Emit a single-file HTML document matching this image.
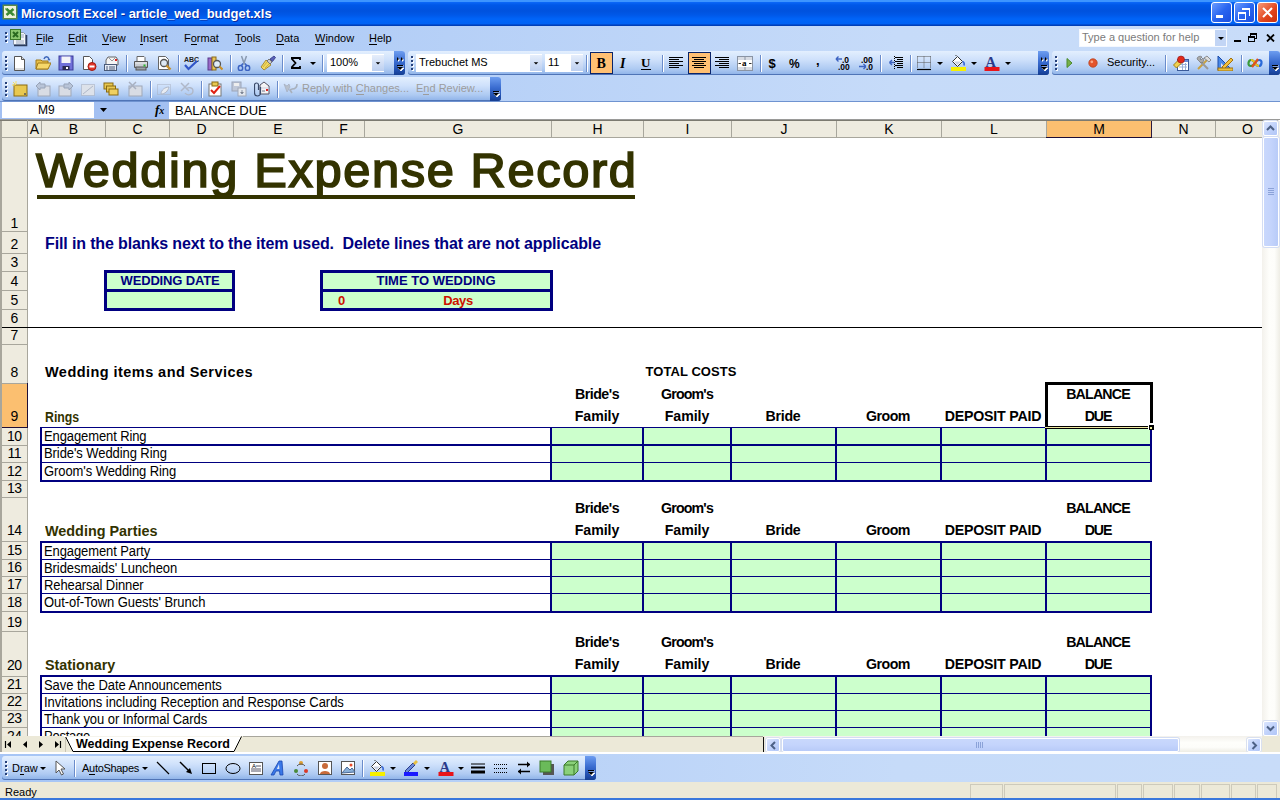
<!DOCTYPE html><html><head><meta charset="utf-8"><style>
*{box-sizing:border-box}
html,body{margin:0;padding:0;width:1280px;height:800px;overflow:hidden;background:#fff;font-family:"Liberation Sans",sans-serif}
.a{position:absolute}
.t{position:absolute;white-space:nowrap;line-height:1}
#title{left:0;top:0;width:1280px;height:26px;background:linear-gradient(#3d95ff 0px,#3d95ff 1.5px,#0a66f6 2.5px,#0058e8 5px,#0052de 11px,#0058e8 15px,#0064f8 19px,#0062f4 23.5px,#0044c4 25px,#003aac 26px)}
.dock{background:linear-gradient(90deg,#a6c5f5,#c6dbf9 70%,#c8dcf9)}
.tb{position:absolute;border-radius:3px 3px 3px 3px;background:linear-gradient(#e3effe 0,#cfe1fb 35%,#aecaf2 75%,#8cb1e8 100%);box-shadow:inset 0 -1px 0 #4f74b6}
.grip{position:absolute;width:3px;height:15px;background:repeating-linear-gradient(#27417a 0 2px,transparent 2px 4px)}
.gd{position:absolute;width:2px;height:2px;background:#27417a;box-shadow:1px 1px 0 #fff}
.sep{position:absolute;width:2px;height:17px;background:linear-gradient(90deg,#6a8ccb 1px,#fff 1px)}
.chev{position:absolute;border-radius:0 3px 3px 0;background:linear-gradient(#6d9df0,#3a6cd0 45%,#1d4aa8 85%,#163e90)}
.hdr{position:absolute;background:#eeebdd;color:#000;font-size:14px;text-align:center}
.mi{position:absolute;top:33px;font-size:12px;color:#000;line-height:1}
.mi u{text-decoration:none;border-bottom:1px solid #000}
</style></head><body>

<div id="title" class="a"></div>
<svg class="a" style="left:2px;top:4px" width="16" height="16"><rect x="0.5" y="0.5" width="15" height="15" fill="#5a8a48"/><rect x="2" y="2" width="12" height="12" fill="#eef3dc"/><path d="M4.5 5L11.5 11M11.5 5L4.5 11" stroke="#3c8a34" stroke-width="2.6"/><path d="M3 5h3M10 11h3" stroke="#3c8a34" stroke-width="1.2"/></svg>
<div class="t" style="left:21px;top:7px;font-size:13px;font-weight:bold;color:#fff;text-shadow:1px 1px 0 #0a2a9a">Microsoft Excel - article_wed_budget.xls</div>
<div class="a" style="left:1211px;top:2px;width:21px;height:21px;border:1px solid #fff;border-radius:3px;background:linear-gradient(135deg,#6b9cff,#2a66f0 50%,#1a4ee0)">
<div class="a" style="left:4px;top:12px;width:7px;height:3px;background:#fff"></div>
</div>
<div class="a" style="left:1234px;top:2px;width:21px;height:21px;border:1px solid #fff;border-radius:3px;background:linear-gradient(135deg,#6b9cff,#2a66f0 50%,#1a4ee0)">
<div class="a" style="left:7px;top:5px;width:8px;height:8px;border:1px solid #fff;border-top-width:2px;border-left:none;border-bottom:none"></div><div class="a" style="left:3px;top:9px;width:8px;height:8px;border:1px solid #fff;border-top-width:2px"></div>
</div>
<div class="a" style="left:1257px;top:2px;width:21px;height:21px;border:1px solid #fff;border-radius:3px;background:linear-gradient(135deg,#fa9a78,#e0441c 60%,#c8300e)">
<svg class="a" style="left:3px;top:3px" width="13" height="13"><path d="M2 2L11 11M11 2L2 11" stroke="#fff" stroke-width="2"/></svg>
</div>
<div class="a dock" style="left:0;top:26px;width:1280px;height:76px"></div>
<div class="gd" style="left:5px;top:32px"></div>
<div class="gd" style="left:5px;top:36px"></div>
<div class="gd" style="left:5px;top:40px"></div>
<svg class="a" style="left:10px;top:29px" width="18" height="18"><path d="M3.5 3.5h10l2 2v10h-12z" fill="#f4f6fa" stroke="#8a98b0"/><path d="M4 16.5h12.5V6" stroke="#2a3a5a" stroke-width="1.6" fill="none"/><path d="M11 6h3M11 8h3M6 12h8M6 14h8" stroke="#9aa8c0"/><rect x="0.5" y="0.5" width="10" height="10" fill="#8cc870" stroke="#3c7a2a"/><path d="M3 3l5 5M8 3L3 8" stroke="#2a6a20" stroke-width="2"/></svg>
<div class="mi" style="left:36px;font-size:11px"><u>F</u>ile</div>
<div class="mi" style="left:68px;font-size:11px"><u>E</u>dit</div>
<div class="mi" style="left:102px;font-size:11px"><u>V</u>iew</div>
<div class="mi" style="left:140px;font-size:11px"><u>I</u>nsert</div>
<div class="mi" style="left:184px;font-size:11px">F<u>o</u>rmat</div>
<div class="mi" style="left:235px;font-size:11px"><u>T</u>ools</div>
<div class="mi" style="left:276px;font-size:11px"><u>D</u>ata</div>
<div class="mi" style="left:315px;font-size:11px"><u>W</u>indow</div>
<div class="mi" style="left:369px;font-size:11px"><u>H</u>elp</div>
<div class="a" style="left:1079px;top:29px;width:148px;height:18px;background:#fff;border:1px solid #f4f8ff"></div>
<div class="t" style="left:1082px;top:32px;font-size:11px;color:#7b7b7b">Type a question for help</div>
<div class="a" style="left:1215px;top:30px;width:11px;height:16px;background:#c2d5f5"></div>
<svg class="a" style="left:1218px;top:37px" width="6" height="3"><path d="M0 0h6L3 3z" fill="#000"/></svg>
<div class="a" style="left:1234px;top:40px;width:7px;height:2px;background:#000"></div>
<div class="a" style="left:1250px;top:33px;width:7px;height:6px;border:1px solid #000;border-top-width:2px"></div><div class="a" style="left:1248px;top:36px;width:7px;height:6px;border:1px solid #000;border-top-width:2px;background:#c6dbf9"></div>
<svg class="a" style="left:1266px;top:34px" width="9" height="8"><path d="M1 0.5L8 7.5M8 0.5L1 7.5" stroke="#000" stroke-width="1.8"/></svg>
<div class="tb" style="left:2px;top:51px;width:403px;height:24px"></div>
<div class="gd" style="left:5px;top:56px"></div>
<div class="gd" style="left:5px;top:60px"></div>
<div class="gd" style="left:5px;top:64px"></div>
<div class="gd" style="left:5px;top:68px"></div>
<div class="chev" style="left:394px;top:51px;width:11px;height:24px"></div>
<svg class="a" style="left:396px;top:57px" width="9" height="6"><path d="M2 1l2 2-2 2zM6 1l2 2-2 2z" fill="#fff"/><path d="M1 0l2 2-2 2zM5 0l2 2-2 2z" fill="#000"/></svg>
<svg class="a" style="left:396px;top:64px" width="9" height="8"><path d="M2 2h6M2 4h6l-3 3z" stroke="#fff" fill="#fff" stroke-width="0.8"/><path d="M1 1.5h6" stroke="#000"/><path d="M1 3h6l-3 3z" fill="#000"/></svg>
<svg class="a" style="left:11px;top:55px" width="16" height="16" viewBox="0 0 16 16"><path d="M3.5 1.5h7l3 3v11h-10z" fill="#fff" stroke="#555"/><path d="M10.5 1.5v3h3" fill="#ddd" stroke="#555"/><path d="M4 14h9" stroke="#bbb"/></svg>
<svg class="a" style="left:35px;top:55px" width="16" height="16" viewBox="0 0 16 16"><path d="M1 5h5l1 1h6v8H1z" fill="#e9c14a" stroke="#a07a1a"/><path d="M3 8h13l-3 6H1z" fill="#f6d86a" stroke="#a07a1a"/><path d="M9 4c1-3 4-3 5 0" stroke="#3e66b8" fill="none" stroke-width="1.5"/><path d="M12.5 4h3l-1.5 2z" fill="#3e66b8"/></svg>
<svg class="a" style="left:58px;top:55px" width="16" height="16" viewBox="0 0 16 16"><rect x="1" y="1" width="14" height="14" fill="#7070d8" stroke="#3a3a9a"/><rect x="3.5" y="1.5" width="9" height="6.5" fill="#f4f4f8"/><rect x="4.5" y="11" width="7" height="4" fill="#2a2a50"/><rect x="8" y="12" width="2" height="2" fill="#fff"/></svg>
<svg class="a" style="left:81px;top:55px" width="16" height="16" viewBox="0 0 16 16"><path d="M2.5 1.5h6l3 3v10h-9z" fill="#fff" stroke="#555"/><circle cx="11" cy="11.5" r="4" fill="#e2362a" stroke="#a01a10"/><rect x="8.5" y="10.5" width="5" height="2" fill="#fff"/></svg>
<svg class="a" style="left:104px;top:55px" width="16" height="16" viewBox="0 0 16 16"><path d="M4 2h8l2 3v5H2V5z" fill="#f4f4f4" stroke="#666"/><path d="M4 2l4 4 4-4" stroke="#999" fill="none"/><rect x="11" y="4" width="2" height="2" fill="#d22"/><rect x="0.5" y="9.5" width="12" height="6" fill="#e8ecf4" stroke="#4a5a78"/><path d="M2 12h2M5 12h6M2 14h2M5 14h6" stroke="#4a5a78"/></svg>
<svg class="a" style="left:133px;top:55px" width="16" height="16" viewBox="0 0 16 16"><path d="M4 1.5h7l1 1v4H4z" fill="#fff" stroke="#666"/><path d="M1.5 6.5h13v6h-13z" fill="#c8ccd2" stroke="#555"/><path d="M2 8h12" stroke="#eee"/><rect x="3" y="12" width="10" height="3" fill="#9aa0a8" stroke="#555"/><rect x="10.5" y="9.5" width="2" height="2" fill="#2db52d"/></svg>
<svg class="a" style="left:156px;top:55px" width="16" height="16" viewBox="0 0 16 16"><path d="M2.5 1.5h7l3 3v10h-10z" fill="#fff" stroke="#666"/><circle cx="8" cy="8" r="3.5" fill="#dde8f4" stroke="#555" stroke-width="1.3"/><path d="M10.5 10.5l4 4" stroke="#c8902a" stroke-width="2.4"/></svg>
<svg class="a" style="left:183px;top:55px" width="16" height="16" viewBox="0 0 16 16"><text x="1" y="7" font-family="Liberation Sans" font-weight="bold" font-size="7" fill="#222">ABC</text><path d="M2 10l3.5 4L14 6" stroke="#3156c8" stroke-width="2.2" fill="none"/></svg>
<svg class="a" style="left:207px;top:55px" width="16" height="16" viewBox="0 0 16 16"><rect x="1" y="3" width="4" height="12" fill="#9a6ac8" stroke="#5a3a8a"/><rect x="5" y="2" width="4" height="13" fill="#e8c45a" stroke="#8a6a1a"/><circle cx="10" cy="9" r="3.5" fill="#e0ecf8" stroke="#555" stroke-width="1.3"/><path d="M12.5 11.5l3 3" stroke="#c8902a" stroke-width="2.2"/></svg>
<svg class="a" style="left:236px;top:55px" width="16" height="16" viewBox="0 0 16 16"><path d="M5.5 1l3 8.5M10.5 1l-3 8.5" stroke="#8a9ab0" stroke-width="1.5"/><path d="M7 8.5l-2 2.5M9 8.5l2 2.5" stroke="#3d64c2" stroke-width="1.4"/><ellipse cx="4.5" cy="13" rx="2.2" ry="2.6" fill="none" stroke="#3d64c2" stroke-width="1.5"/><ellipse cx="11.5" cy="13" rx="2.2" ry="2.6" fill="none" stroke="#3d64c2" stroke-width="1.5"/></svg>
<svg class="a" style="left:260px;top:55px" width="16" height="16" viewBox="0 0 16 16"><path d="M1 12l5-7 5 5-7 5z" fill="#f0d860" stroke="#9a7a20" stroke-width="0.8"/><path d="M3 12l4-5M5 13l4-4" stroke="#c8a838" stroke-width="0.8"/><path d="M7 6l2-2 3 3-2 2z" fill="#c8c8d0" stroke="#777"/><path d="M10 4l4-3 1.5 1.5-3 4z" fill="#5a60b8" stroke="#303880" stroke-width="0.8"/></svg>
<svg class="a" style="left:288px;top:55px" width="16" height="16" viewBox="0 0 16 16"><path d="M3 3h9v2M3.5 3.5l4 4.5-4 4.5M3 13h9v-2" stroke="#000" stroke-width="1.8" fill="none"/></svg>
<div class="sep" style="left:126px;top:55px"></div>
<div class="sep" style="left:178px;top:55px"></div>
<div class="sep" style="left:230px;top:55px"></div>
<div class="sep" style="left:282px;top:55px"></div>
<div class="sep" style="left:322px;top:55px"></div>
<svg class="a" style="left:305px;top:55px" width="16" height="16" viewBox="0 0 16 16"><path d="M5 7h6l-3 3z" fill="#000"/></svg>
<div class="a" style="left:327px;top:54px;width:57px;height:18px;background:#fff"></div>
<div class="t" style="left:330px;top:57px;font-size:11px">100%</div>
<div class="a" style="left:372px;top:55px;width:12px;height:16px;background:linear-gradient(#e6eefb,#bccff0)"></div>
<svg class="a" style="left:372px;top:55px" width="12" height="16" viewBox="0 0 16 16"><path d="M5 7h6l-3 3z" fill="#000"/></svg>
<div class="tb" style="left:408px;top:51px;width:641px;height:24px"></div>
<div class="gd" style="left:411px;top:56px"></div>
<div class="gd" style="left:411px;top:60px"></div>
<div class="gd" style="left:411px;top:64px"></div>
<div class="gd" style="left:411px;top:68px"></div>
<div class="chev" style="left:1038px;top:51px;width:11px;height:24px"></div>
<svg class="a" style="left:1040px;top:57px" width="9" height="6"><path d="M2 1l2 2-2 2zM6 1l2 2-2 2z" fill="#fff"/><path d="M1 0l2 2-2 2zM5 0l2 2-2 2z" fill="#000"/></svg>
<svg class="a" style="left:1040px;top:64px" width="9" height="8"><path d="M2 2h6M2 4h6l-3 3z" stroke="#fff" fill="#fff" stroke-width="0.8"/><path d="M1 1.5h6" stroke="#000"/><path d="M1 3h6l-3 3z" fill="#000"/></svg>
<div class="a" style="left:416px;top:54px;width:126px;height:18px;background:#fff"></div>
<div class="t" style="left:419px;top:57px;font-size:11px">Trebuchet MS</div>
<div class="a" style="left:530px;top:55px;width:12px;height:16px;background:linear-gradient(#e6eefb,#bccff0)"></div>
<svg class="a" style="left:530px;top:55px" width="12" height="16" viewBox="0 0 16 16"><path d="M5 7h6l-3 3z" fill="#000"/></svg>
<div class="a" style="left:545px;top:54px;width:38px;height:18px;background:#fff"></div>
<div class="t" style="left:548px;top:57px;font-size:11px">11</div>
<div class="a" style="left:571px;top:55px;width:12px;height:16px;background:linear-gradient(#e6eefb,#bccff0)"></div>
<svg class="a" style="left:571px;top:55px" width="12" height="16" viewBox="0 0 16 16"><path d="M5 7h6l-3 3z" fill="#000"/></svg>
<div class="sep" style="left:586px;top:55px"></div>
<div class="a" style="left:590px;top:52px;width:23px;height:22px;background:#ffc073;border:1px solid #0a246a"></div>
<div class="a" style="left:688px;top:52px;width:23px;height:22px;background:#ffc073;border:1px solid #0a246a"></div>
<svg class="a" style="left:593px;top:55px" width="16" height="16" viewBox="0 0 16 16"><text x="3.5" y="13" font-family="Liberation Serif" font-weight="bold" font-size="14" fill="#000">B</text></svg>
<svg class="a" style="left:616px;top:55px" width="16" height="16" viewBox="0 0 16 16"><text x="4" y="13" font-family="Liberation Serif" font-style="italic" font-weight="bold" font-size="14" fill="#000">I</text></svg>
<svg class="a" style="left:638px;top:55px" width="16" height="16" viewBox="0 0 16 16"><text x="3" y="12" font-family="Liberation Serif" font-weight="bold" font-size="13" fill="#000">U</text><path d="M3 14.5h10" stroke="#000"/></svg>
<svg class="a" style="left:668px;top:55px" width="16" height="16" viewBox="0 0 16 16"><path d="M1 2.5h14M1 4.5h10M1 6.5h14M1 8.5h10M1 10.5h14M1 12.5h10" stroke="#000"/></svg>
<svg class="a" style="left:691px;top:55px" width="16" height="16" viewBox="0 0 16 16"><path d="M1 2.5h14M3 4.5h10M1 6.5h14M3 8.5h10M1 10.5h14M3 12.5h10" stroke="#000"/></svg>
<svg class="a" style="left:714px;top:55px" width="16" height="16" viewBox="0 0 16 16"><path d="M1 2.5h14M5 4.5h10M1 6.5h14M5 8.5h10M1 10.5h14M5 12.5h10" stroke="#000"/></svg>
<svg class="a" style="left:737px;top:55px" width="16" height="16" viewBox="0 0 16 16"><rect x="0.5" y="1.5" width="15" height="14" fill="#d8dce4" stroke="#8a94a4"/><rect x="1" y="5" width="14" height="7" fill="#fff"/><path d="M8 2v3M8 12v3" stroke="#8a94a4"/><text x="5" y="11" font-family="Liberation Serif" font-weight="bold" font-size="9" fill="#000">a</text><path d="M1.5 8.5h2.5M12 8.5h2.5" stroke="#333"/></svg>
<svg class="a" style="left:765px;top:55px" width="16" height="16" viewBox="0 0 16 16"><text x="3.5" y="13" font-family="Liberation Sans" font-weight="bold" font-size="13" fill="#000">$</text></svg>
<svg class="a" style="left:788px;top:55px" width="16" height="16" viewBox="0 0 16 16"><text x="1" y="13" font-family="Liberation Sans" font-weight="bold" font-size="12" fill="#000">%</text></svg>
<svg class="a" style="left:811px;top:55px" width="16" height="16" viewBox="0 0 16 16"><text x="5" y="10" font-family="Liberation Sans" font-weight="bold" font-size="13" fill="#000">,</text></svg>
<svg class="a" style="left:835px;top:55px" width="16" height="16" viewBox="0 0 16 16"><text x="7" y="7.5" font-family="Liberation Sans" font-weight="bold" font-size="8.5" fill="#000">.0</text><text x="3" y="15" font-family="Liberation Sans" font-weight="bold" font-size="8.5" fill="#000">.00</text><path d="M1 4h6M1 4l2.5-2.5M1 4l2.5 2.5" stroke="#3d64c2" stroke-width="1.4"/></svg>
<svg class="a" style="left:858px;top:55px" width="16" height="16" viewBox="0 0 16 16"><text x="3" y="7.5" font-family="Liberation Sans" font-weight="bold" font-size="8.5" fill="#000">.00</text><text x="8" y="15" font-family="Liberation Sans" font-weight="bold" font-size="8.5" fill="#000">.0</text><path d="M1 11.5h7M8 11.5l-2.5-2.5M8 11.5l-2.5 2.5" stroke="#3d64c2" stroke-width="1.4"/></svg>
<svg class="a" style="left:888px;top:55px" width="16" height="16" viewBox="0 0 16 16"><path d="M7 2.5h8M9 4.5h6M7 6.5h8M9 8.5h6M7 10.5h8M9 12.5h6" stroke="#000" stroke-width="1.1"/><path d="M6.5 1v14" stroke="#000" stroke-dasharray="1 1"/><path d="M1.5 7.5h5M1.5 7.5l2.5-2.5M1.5 7.5l2.5 2.5" stroke="#3d64c2" stroke-width="1.4"/></svg>
<svg class="a" style="left:916px;top:55px" width="16" height="16" viewBox="0 0 16 16"><path d="M1.5 1.5h13M1.5 1.5v12M14.5 1.5v12M8 1.5v12M1.5 7.5h13" stroke="#555" stroke-dasharray="1 1" fill="none"/><path d="M1 14.5h14" stroke="#000" stroke-width="1.2"/></svg>
<svg class="a" style="left:950px;top:55px" width="16" height="16" viewBox="0 0 16 16"><path d="M2.5 6.5l5-5 5 5-5 5z" fill="#fff" stroke="#333"/><path d="M4 6.5h7l-3.5 3.5z" fill="#c8d0e0"/><path d="M6 1V-1" stroke="#333"/><path d="M12.5 6.5c1.5 0.5 2 2 1.5 4" stroke="#3a6ad8" stroke-width="1.6" fill="none"/><rect x="1" y="12" width="15" height="4" fill="#f6f000"/></svg>
<svg class="a" style="left:984px;top:55px" width="16" height="16" viewBox="0 0 16 16"><text x="1.5" y="11.5" font-family="Liberation Serif" font-weight="bold" font-size="14.5" fill="#2a3a8a">A</text><rect x="0.5" y="12" width="15" height="4" fill="#e8141a"/></svg>
<div class="sep" style="left:662px;top:55px"></div>
<div class="sep" style="left:760px;top:55px"></div>
<div class="sep" style="left:880px;top:55px"></div>
<div class="sep" style="left:910px;top:55px"></div>
<svg class="a" style="left:932px;top:55px" width="16" height="16" viewBox="0 0 16 16"><path d="M5 7h6l-3 3z" fill="#000"/></svg>
<svg class="a" style="left:966px;top:55px" width="16" height="16" viewBox="0 0 16 16"><path d="M5 7h6l-3 3z" fill="#000"/></svg>
<svg class="a" style="left:1000px;top:55px" width="16" height="16" viewBox="0 0 16 16"><path d="M5 7h6l-3 3z" fill="#000"/></svg>
<div class="tb" style="left:1052px;top:51px;width:228px;height:24px"></div>
<div class="gd" style="left:1055px;top:56px"></div>
<div class="gd" style="left:1055px;top:60px"></div>
<div class="gd" style="left:1055px;top:64px"></div>
<div class="gd" style="left:1055px;top:68px"></div>
<div class="chev" style="left:1269px;top:51px;width:11px;height:24px"></div>
<svg class="a" style="left:1271px;top:64px" width="9" height="8"><path d="M2 2h6M2 4h6l-3 3z" stroke="#fff" fill="#fff" stroke-width="0.8"/><path d="M1 1.5h6" stroke="#000"/><path d="M1 3h6l-3 3z" fill="#000"/></svg>
<svg class="a" style="left:1061px;top:55px" width="16" height="16" viewBox="0 0 16 16"><path d="M6 3.5l5 4.5-5 4.5z" fill="#78b04a" stroke="#4a8a2a"/></svg>
<svg class="a" style="left:1085px;top:55px" width="16" height="16" viewBox="0 0 16 16"><circle cx="8" cy="8" r="4.2" fill="#e4542c" stroke="#b8401c" stroke-width="0.8"/><circle cx="6.8" cy="6.8" r="1.4" fill="#f8a888"/></svg>
<svg class="a" style="left:1173px;top:55px" width="16" height="16" viewBox="0 0 16 16"><rect x="4.5" y="4.5" width="11" height="11" fill="#fff" stroke="#3a5a9a"/><rect x="5" y="5" width="10" height="2" fill="#6a8ad8"/><path d="M6 9.5h8M6 12h8M9.5 8v7M12.5 8v7" stroke="#9ab0d8"/><path d="M0.5 10l5-5 3 3-5 5z" fill="#f0d050" stroke="#a08010"/><circle cx="8" cy="4.5" r="3.5" fill="#e02818" stroke="#901010" stroke-width="0.6"/></svg>
<svg class="a" style="left:1195px;top:55px" width="16" height="16" viewBox="0 0 16 16"><path d="M3 14L12 5" stroke="#c8a040" stroke-width="2"/><path d="M13 14L5 6" stroke="#9a9a9a" stroke-width="2"/><path d="M2 4a3 3 0 0 1 5-2l-2 2 1 1 2-2a3 3 0 0 1-2 5z" fill="#aaa" stroke="#666" stroke-width="0.6"/><path d="M9 3l3-2 4 4-2 2z" fill="#ddd" stroke="#777" stroke-width="0.8"/></svg>
<svg class="a" style="left:1217px;top:55px" width="16" height="16" viewBox="0 0 16 16"><path d="M1 1v14h14z" fill="#4a8ae8" stroke="#1a4aa8"/><path d="M4 8v4h4z" fill="#dde"/><path d="M5 12l9-9 2 2-9 9z" fill="#f0c040" stroke="#a07010"/><rect x="1" y="13" width="15" height="3" fill="#e8c040" stroke="#a07010"/></svg>
<svg class="a" style="left:1247px;top:55px" width="16" height="16" viewBox="0 0 16 16"><path d="M8 8c-2-4-6-4-6.5 0S6 12 8 8" fill="none" stroke="#3a9a3a" stroke-width="2.2"/><path d="M8 8c2 4 6 4 6.5 0S10 4 8 8" fill="none" stroke="#2a6ad8" stroke-width="2.2"/><path d="M4 5c2 0 3 1 4 3M12 11c-2 0-3-1-4-3" stroke="#e8c020" stroke-width="2"/><path d="M5 12l6-8" stroke="#e05020" stroke-width="2.2"/></svg>
<div class="t" style="left:1107px;top:57px;font-size:11px">Security...</div>
<div class="sep" style="left:1165px;top:55px"></div>
<div class="sep" style="left:1241px;top:55px"></div>
<div class="tb" style="left:2px;top:77px;width:499px;height:24px"></div>
<div class="gd" style="left:5px;top:82px"></div>
<div class="gd" style="left:5px;top:86px"></div>
<div class="gd" style="left:5px;top:90px"></div>
<div class="gd" style="left:5px;top:94px"></div>
<div class="chev" style="left:490px;top:77px;width:11px;height:24px"></div>
<svg class="a" style="left:492px;top:90px" width="9" height="8"><path d="M2 2h6M2 4h6l-3 3z" stroke="#fff" fill="#fff" stroke-width="0.8"/><path d="M1 1.5h6" stroke="#000"/><path d="M1 3h6l-3 3z" fill="#000"/></svg>
<svg class="a" style="left:12px;top:81px" width="16" height="16" viewBox="0 0 16 16"><rect x="2" y="4" width="13" height="11" fill="#e8c850" stroke="#8a6a10"/><circle cx="13" cy="13" r="1" fill="#555"/><path d="M1 1l3 3M4 0v3M0 4h3" stroke="#f8e060"/></svg>
<svg class="a" style="left:35px;top:81px" width="16" height="16" viewBox="0 0 16 16"><rect x="3" y="5" width="12" height="10" fill="#d8dce4" stroke="#a0a8b8"/><path d="M1 5l4-4v2h5v4H5v2z" fill="#b8c4d8" stroke="#98a4b8"/></svg>
<svg class="a" style="left:58px;top:81px" width="16" height="16" viewBox="0 0 16 16"><rect x="1" y="5" width="12" height="10" fill="#d8dce4" stroke="#a0a8b8"/><path d="M15 5l-4-4v2H6v4h5v2z" fill="#b8c4d8" stroke="#98a4b8"/></svg>
<svg class="a" style="left:80px;top:81px" width="16" height="16" viewBox="0 0 16 16"><rect x="1.5" y="3.5" width="13" height="11" fill="#dde2ea" stroke="#a0a8b8" stroke-dasharray="1 1"/><path d="M3 13l10-8" stroke="#b0b8c8"/></svg>
<svg class="a" style="left:103px;top:81px" width="16" height="16" viewBox="0 0 16 16"><rect x="1" y="2" width="9" height="6" fill="#e8c850" stroke="#8a6a10"/><rect x="3.5" y="5" width="9" height="6" fill="#e8c850" stroke="#8a6a10"/><rect x="6" y="8" width="9" height="6" fill="#f0d060" stroke="#8a6a10"/></svg>
<svg class="a" style="left:127px;top:81px" width="16" height="16" viewBox="0 0 16 16"><rect x="2" y="5" width="13" height="10" fill="#d8dce4" stroke="#a0a8b8"/><path d="M2 1l7 7M9 1L2 8" stroke="#a8b0c0" stroke-width="1.5"/></svg>
<svg class="a" style="left:156px;top:81px" width="16" height="16" viewBox="0 0 16 16"><rect x="1.5" y="3.5" width="13" height="10" fill="none" stroke="#a8b0c0" stroke-dasharray="1 1"/><path d="M5 13c0-4 4-7 8-7-1 4-4 7-8 7z" fill="#e8ecf2" stroke="#b0b8c8"/></svg>
<svg class="a" style="left:179px;top:81px" width="16" height="16" viewBox="0 0 16 16"><path d="M2 2l8 8M10 2L2 10" stroke="#b0b8c8" stroke-width="1.5"/><path d="M6 12c2 3 8 2 8-2s-5-4-7-2" fill="none" stroke="#b0b8c8" stroke-width="1.3"/></svg>
<svg class="a" style="left:207px;top:81px" width="16" height="16" viewBox="0 0 16 16"><rect x="2" y="3" width="12" height="12" fill="#fff" stroke="#777"/><rect x="5" y="1" width="6" height="4" fill="#e8c850" stroke="#8a6a10"/><path d="M4 9l3 3 6-7" stroke="#e02010" stroke-width="2" fill="none"/></svg>
<svg class="a" style="left:231px;top:81px" width="16" height="16" viewBox="0 0 16 16"><rect x="1" y="1" width="9" height="9" fill="#c0c8d8" stroke="#9aa4b8"/><rect x="3" y="2" width="5" height="3" fill="#eee"/><rect x="7" y="7" width="8" height="8" fill="#e4e8ee" stroke="#a0a8b8"/><path d="M11 9v4M9.5 11.5l1.5 1.5 1.5-1.5" stroke="#8a94a8"/></svg>
<svg class="a" style="left:254px;top:81px" width="16" height="16" viewBox="0 0 16 16"><path d="M6 4l4-3 5 4v8H6z" fill="#f4f4f6" stroke="#556"/><path d="M6 7h9" stroke="#ccd"/><path d="M8 10h3" stroke="#889" stroke-width="1.2"/><rect x="12" y="8" width="2" height="2" fill="#d22"/><path d="M4.5 9V4a2 2 0 0 0-4 0v8a3 3 0 0 0 6 0V6" fill="none" stroke="#3a4a6a" stroke-width="1.2"/></svg>
<svg class="a" style="left:283px;top:81px" width="16" height="16" viewBox="0 0 16 16"><path d="M1 3l3 2 2-2 1 3-3 5z" fill="#b8c0cc" stroke="#a0a8b8" stroke-width="0.6"/><path d="M9 12l-2-3 2-1M9 8c3 0 5-2 5-5" stroke="#a8b0bc" stroke-width="1.6" fill="none"/></svg>
<div class="sep" style="left:150px;top:81px"></div>
<div class="sep" style="left:201px;top:81px"></div>
<div class="sep" style="left:277px;top:81px"></div>
<div class="t" style="left:302px;top:83px;font-size:11px;color:#9c9c9c">Reply with <u style="text-decoration:none;border-bottom:1px solid #9c9c9c">C</u>hanges...</div>
<div class="t" style="left:416px;top:83px;font-size:11px;color:#9c9c9c">E<u style="text-decoration:none;border-bottom:1px solid #9c9c9c">n</u>d Review...</div>
<div class="a" style="left:0;top:101px;width:1280px;height:19px;background:#a3c0f2"></div>
<div class="a" style="left:0;top:101px;width:1280px;height:1px;background:#6f93d0"></div>
<div class="a" style="left:2px;top:102px;width:92px;height:16px;background:#fff"></div>
<div class="t" style="left:38px;top:104px;font-size:12px">M9</div>
<svg class="a" style="left:100px;top:108px" width="8" height="5"><path d="M0 0h7L3.5 4z" fill="#000"/></svg>
<div class="t" style="left:155px;top:102px;font:italic bold 13px 'Liberation Serif'">f<span style="font-size:10px">x</span></div>
<div class="a" style="left:169px;top:102px;width:1111px;height:17px;background:#fff"></div>
<div class="t" style="left:175px;top:104px;font-size:13px">BALANCE DUE</div>
<div class="a" style="left:0;top:119px;width:1280px;height:1px;background:#9a9a98"></div>
<div class="a" style="left:0;top:120px;width:2px;height:616px;background:#a8a69c"></div>
<div class="hdr" style="left:2px;top:120px;width:25px;height:17px"></div>
<div class="hdr" style="left:28px;top:120px;width:13px;height:17px;background:#eeebdf;line-height:19px">A</div>
<div class="a" style="left:41px;top:120px;width:1px;height:17px;background:#a8a69c"></div>
<div class="hdr" style="left:42px;top:120px;width:63px;height:17px;background:#eeebdf;line-height:19px">B</div>
<div class="a" style="left:105px;top:120px;width:1px;height:17px;background:#a8a69c"></div>
<div class="hdr" style="left:106px;top:120px;width:63px;height:17px;background:#eeebdf;line-height:19px">C</div>
<div class="a" style="left:169px;top:120px;width:1px;height:17px;background:#a8a69c"></div>
<div class="hdr" style="left:170px;top:120px;width:63px;height:17px;background:#eeebdf;line-height:19px">D</div>
<div class="a" style="left:233px;top:120px;width:1px;height:17px;background:#a8a69c"></div>
<div class="hdr" style="left:234px;top:120px;width:88px;height:17px;background:#eeebdf;line-height:19px">E</div>
<div class="a" style="left:322px;top:120px;width:1px;height:17px;background:#a8a69c"></div>
<div class="hdr" style="left:323px;top:120px;width:41px;height:17px;background:#eeebdf;line-height:19px">F</div>
<div class="a" style="left:364px;top:120px;width:1px;height:17px;background:#a8a69c"></div>
<div class="hdr" style="left:365px;top:120px;width:186px;height:17px;background:#eeebdf;line-height:19px">G</div>
<div class="a" style="left:551px;top:120px;width:1px;height:17px;background:#a8a69c"></div>
<div class="hdr" style="left:552px;top:120px;width:91px;height:17px;background:#eeebdf;line-height:19px">H</div>
<div class="a" style="left:643px;top:120px;width:1px;height:17px;background:#a8a69c"></div>
<div class="hdr" style="left:644px;top:120px;width:87px;height:17px;background:#eeebdf;line-height:19px">I</div>
<div class="a" style="left:731px;top:120px;width:1px;height:17px;background:#a8a69c"></div>
<div class="hdr" style="left:732px;top:120px;width:104px;height:17px;background:#eeebdf;line-height:19px">J</div>
<div class="a" style="left:836px;top:120px;width:1px;height:17px;background:#a8a69c"></div>
<div class="hdr" style="left:837px;top:120px;width:104px;height:17px;background:#eeebdf;line-height:19px">K</div>
<div class="a" style="left:941px;top:120px;width:1px;height:17px;background:#a8a69c"></div>
<div class="hdr" style="left:942px;top:120px;width:104px;height:17px;background:#eeebdf;line-height:19px">L</div>
<div class="a" style="left:1046px;top:120px;width:1px;height:17px;background:#a8a69c"></div>
<div class="hdr" style="left:1047px;top:120px;width:104px;height:17px;background:#fbbf70;line-height:19px">M</div>
<div class="a" style="left:1151px;top:120px;width:1px;height:17px;background:#2a1a40"></div>
<div class="hdr" style="left:1152px;top:120px;width:63px;height:17px;background:#eeebdf;line-height:19px">N</div>
<div class="a" style="left:1215px;top:120px;width:1px;height:17px;background:#a8a69c"></div>
<div class="hdr" style="left:1216px;top:120px;width:63px;height:17px;background:#eeebdf;line-height:19px">O</div>
<div class="a" style="left:2px;top:137px;width:1260px;height:1px;background:#a8a69c"></div><div class="a" style="left:0;top:120px;width:1278px;height:1px;background:#7c7a70"></div>
<div class="a" style="left:1046px;top:137px;width:106px;height:1px;background:#1e0f38"></div>
<div class="a" style="left:27px;top:120px;width:1px;height:616px;background:#a8a69c"></div>
<div class="hdr" style="left:2px;top:138px;width:25px;height:93px;background:#eeebdf"></div>
<div class="t" style="left:2px;width:25px;top:215.8px;font-size:14px;letter-spacing:-0.6px;text-indent:-0.6px;text-align:center">1</div>
<div class="a" style="left:2px;top:231px;width:25px;height:1px;background:#a8a69c"></div>
<div class="hdr" style="left:2px;top:232px;width:25px;height:21px;background:#eeebdf"></div>
<div class="t" style="left:2px;width:25px;top:236.8px;font-size:14px;letter-spacing:-0.6px;text-indent:-0.6px;text-align:center">2</div>
<div class="a" style="left:2px;top:253px;width:25px;height:1px;background:#a8a69c"></div>
<div class="hdr" style="left:2px;top:254px;width:25px;height:17px;background:#eeebdf"></div>
<div class="t" style="left:2px;width:25px;top:254.8px;font-size:14px;letter-spacing:-0.6px;text-indent:-0.6px;text-align:center">3</div>
<div class="a" style="left:2px;top:271px;width:25px;height:1px;background:#a8a69c"></div>
<div class="hdr" style="left:2px;top:272px;width:25px;height:18px;background:#eeebdf"></div>
<div class="t" style="left:2px;width:25px;top:273.8px;font-size:14px;letter-spacing:-0.6px;text-indent:-0.6px;text-align:center">4</div>
<div class="a" style="left:2px;top:290px;width:25px;height:1px;background:#a8a69c"></div>
<div class="hdr" style="left:2px;top:291px;width:25px;height:18px;background:#eeebdf"></div>
<div class="t" style="left:2px;width:25px;top:292.8px;font-size:14px;letter-spacing:-0.6px;text-indent:-0.6px;text-align:center">5</div>
<div class="a" style="left:2px;top:309px;width:25px;height:1px;background:#a8a69c"></div>
<div class="hdr" style="left:2px;top:310px;width:25px;height:17px;background:#eeebdf"></div>
<div class="t" style="left:2px;width:25px;top:310.8px;font-size:14px;letter-spacing:-0.6px;text-indent:-0.6px;text-align:center">6</div>
<div class="a" style="left:2px;top:327px;width:25px;height:1px;background:#a8a69c"></div>
<div class="hdr" style="left:2px;top:328px;width:25px;height:16px;background:#eeebdf"></div>
<div class="t" style="left:2px;width:25px;top:327.8px;font-size:14px;letter-spacing:-0.6px;text-indent:-0.6px;text-align:center">7</div>
<div class="a" style="left:2px;top:344px;width:25px;height:1px;background:#a8a69c"></div>
<div class="hdr" style="left:2px;top:345px;width:25px;height:38px;background:#eeebdf"></div>
<div class="t" style="left:2px;width:25px;top:365.3px;font-size:14px;letter-spacing:-0.6px;text-indent:-0.6px;text-align:center">8</div>
<div class="a" style="left:2px;top:383px;width:25px;height:1px;background:#a8a69c"></div>
<div class="hdr" style="left:2px;top:384px;width:25px;height:43px;background:#fbbf70"></div>
<div class="t" style="left:2px;width:25px;top:409.3px;font-size:14px;letter-spacing:-0.6px;text-indent:-0.6px;text-align:center">9</div>
<div class="a" style="left:2px;top:427px;width:25px;height:1px;background:#a8a69c"></div>
<div class="hdr" style="left:2px;top:428px;width:25px;height:17px;background:#eeebdf"></div>
<div class="t" style="left:2px;width:25px;top:428.8px;font-size:14px;letter-spacing:-0.6px;text-indent:-0.6px;text-align:center">10</div>
<div class="a" style="left:2px;top:445px;width:25px;height:1px;background:#a8a69c"></div>
<div class="hdr" style="left:2px;top:446px;width:25px;height:16px;background:#eeebdf"></div>
<div class="t" style="left:2px;width:25px;top:445.8px;font-size:14px;letter-spacing:-0.6px;text-indent:-0.6px;text-align:center">11</div>
<div class="a" style="left:2px;top:462px;width:25px;height:1px;background:#a8a69c"></div>
<div class="hdr" style="left:2px;top:463px;width:25px;height:17px;background:#eeebdf"></div>
<div class="t" style="left:2px;width:25px;top:463.8px;font-size:14px;letter-spacing:-0.6px;text-indent:-0.6px;text-align:center">12</div>
<div class="a" style="left:2px;top:480px;width:25px;height:1px;background:#a8a69c"></div>
<div class="hdr" style="left:2px;top:481px;width:25px;height:16px;background:#eeebdf"></div>
<div class="t" style="left:2px;width:25px;top:480.8px;font-size:14px;letter-spacing:-0.6px;text-indent:-0.6px;text-align:center">13</div>
<div class="a" style="left:2px;top:497px;width:25px;height:1px;background:#a8a69c"></div>
<div class="hdr" style="left:2px;top:498px;width:25px;height:43px;background:#eeebdf"></div>
<div class="t" style="left:2px;width:25px;top:523.3px;font-size:14px;letter-spacing:-0.6px;text-indent:-0.6px;text-align:center">14</div>
<div class="a" style="left:2px;top:541px;width:25px;height:1px;background:#a8a69c"></div>
<div class="hdr" style="left:2px;top:542px;width:25px;height:17px;background:#eeebdf"></div>
<div class="t" style="left:2px;width:25px;top:542.8px;font-size:14px;letter-spacing:-0.6px;text-indent:-0.6px;text-align:center">15</div>
<div class="a" style="left:2px;top:559px;width:25px;height:1px;background:#a8a69c"></div>
<div class="hdr" style="left:2px;top:560px;width:25px;height:16px;background:#eeebdf"></div>
<div class="t" style="left:2px;width:25px;top:559.8px;font-size:14px;letter-spacing:-0.6px;text-indent:-0.6px;text-align:center">16</div>
<div class="a" style="left:2px;top:576px;width:25px;height:1px;background:#a8a69c"></div>
<div class="hdr" style="left:2px;top:577px;width:25px;height:16px;background:#eeebdf"></div>
<div class="t" style="left:2px;width:25px;top:576.8px;font-size:14px;letter-spacing:-0.6px;text-indent:-0.6px;text-align:center">17</div>
<div class="a" style="left:2px;top:593px;width:25px;height:1px;background:#a8a69c"></div>
<div class="hdr" style="left:2px;top:594px;width:25px;height:17px;background:#eeebdf"></div>
<div class="t" style="left:2px;width:25px;top:594.8px;font-size:14px;letter-spacing:-0.6px;text-indent:-0.6px;text-align:center">18</div>
<div class="a" style="left:2px;top:611px;width:25px;height:1px;background:#a8a69c"></div>
<div class="hdr" style="left:2px;top:612px;width:25px;height:19px;background:#eeebdf"></div>
<div class="t" style="left:2px;width:25px;top:614.8px;font-size:14px;letter-spacing:-0.6px;text-indent:-0.6px;text-align:center">19</div>
<div class="a" style="left:2px;top:631px;width:25px;height:1px;background:#a8a69c"></div>
<div class="hdr" style="left:2px;top:632px;width:25px;height:44px;background:#eeebdf"></div>
<div class="t" style="left:2px;width:25px;top:658.3px;font-size:14px;letter-spacing:-0.6px;text-indent:-0.6px;text-align:center">20</div>
<div class="a" style="left:2px;top:676px;width:25px;height:1px;background:#a8a69c"></div>
<div class="hdr" style="left:2px;top:677px;width:25px;height:16px;background:#eeebdf"></div>
<div class="t" style="left:2px;width:25px;top:676.8px;font-size:14px;letter-spacing:-0.6px;text-indent:-0.6px;text-align:center">21</div>
<div class="a" style="left:2px;top:693px;width:25px;height:1px;background:#a8a69c"></div>
<div class="hdr" style="left:2px;top:694px;width:25px;height:16px;background:#eeebdf"></div>
<div class="t" style="left:2px;width:25px;top:693.8px;font-size:14px;letter-spacing:-0.6px;text-indent:-0.6px;text-align:center">22</div>
<div class="a" style="left:2px;top:710px;width:25px;height:1px;background:#a8a69c"></div>
<div class="hdr" style="left:2px;top:711px;width:25px;height:16px;background:#eeebdf"></div>
<div class="t" style="left:2px;width:25px;top:710.8px;font-size:14px;letter-spacing:-0.6px;text-indent:-0.6px;text-align:center">23</div>
<div class="a" style="left:2px;top:727px;width:25px;height:1px;background:#a8a69c"></div>
<div class="hdr" style="left:2px;top:728px;width:25px;height:17px;background:#eeebdf"></div>
<div class="t" style="left:2px;width:25px;top:728.8px;font-size:14px;letter-spacing:-0.6px;text-indent:-0.6px;text-align:center">24</div>
<div class="a" style="left:27px;top:383px;width:1px;height:45px;background:#1e0f38"></div>
<div class="a" style="left:2px;top:427px;width:26px;height:1px;background:#1e0f38"></div>
<div class="t" style="left:36px;top:146px;font-size:48.8px;font-weight:normal;color:#333300;-webkit-text-stroke:1.7px #333300;letter-spacing:1.618px;">Wedding Expense Record</div>
<div class="a" style="left:37px;top:195px;width:598px;height:4px;background:#333300"></div>
<div class="t" style="left:45px;top:236px;font-size:16px;font-weight:bold;color:#000080;letter-spacing:-0.132px;">Fill in the blanks next to the item used.&nbsp; Delete lines that are not applicable</div>
<div class="a" style="left:104px;top:270px;width:131px;height:41px;background:#ccffcc;border:3px solid #000080"></div>
<div class="a" style="left:104px;top:289px;width:131px;height:3px;background:#000080"></div>
<div class="t" style="left:20px;width:300px;text-align:center;top:274px;font-size:13px;font-weight:bold;color:#000080;letter-spacing:-0.170px;">WEDDING DATE</div>
<div class="a" style="left:320px;top:270px;width:233px;height:41px;background:#ccffcc;border:3px solid #000080"></div>
<div class="a" style="left:320px;top:289px;width:233px;height:3px;background:#000080"></div>
<div class="t" style="left:286px;width:300px;text-align:center;top:274px;font-size:13px;font-weight:bold;color:#000080;letter-spacing:0.006px;">TIME TO WEDDING</div>
<div class="t" style="left:338px;top:294px;font-size:13px;font-weight:bold;color:#cc1100;">0</div>
<div class="t" style="left:308px;width:300px;text-align:center;top:294px;font-size:13px;font-weight:bold;color:#cc1100;letter-spacing:-0.359px;">Days</div>
<div class="a" style="left:2px;top:327px;width:1260px;height:1px;background:#000"></div>
<div class="t" style="left:45px;top:365px;font-size:14.5px;font-weight:bold;color:#000;letter-spacing:0.446px;">Wedding items and Services</div>
<div class="t" style="left:541px;width:300px;text-align:center;top:365px;font-size:13px;font-weight:bold;color:#000;letter-spacing:0.072px;">TOTAL COSTS</div>
<div class="t" style="left:45px;top:410px;font-size:14px;font-weight:bold;color:#333300;transform:scaleX(0.8795);transform-origin:0 0;">Rings</div>
<div class="t" style="left:447px;width:300px;text-align:center;top:387px;font-size:14.2px;font-weight:bold;color:#000;letter-spacing:-0.478px;">Bride's</div>
<div class="t" style="left:447px;width:300px;text-align:center;top:409px;font-size:14.2px;font-weight:bold;color:#000;letter-spacing:-0.057px;">Family</div>
<div class="t" style="left:537px;width:300px;text-align:center;top:387px;font-size:14.2px;font-weight:bold;color:#000;letter-spacing:-0.836px;">Groom's</div>
<div class="t" style="left:537px;width:300px;text-align:center;top:409px;font-size:14.2px;font-weight:bold;color:#000;letter-spacing:-0.057px;">Family</div>
<div class="t" style="left:633px;width:300px;text-align:center;top:409px;font-size:14.2px;font-weight:bold;color:#000;letter-spacing:-0.274px;">Bride</div>
<div class="t" style="left:738px;width:300px;text-align:center;top:409px;font-size:14.2px;font-weight:bold;color:#000;letter-spacing:-0.511px;">Groom</div>
<div class="t" style="left:843px;width:300px;text-align:center;top:409px;font-size:14.2px;font-weight:bold;color:#000;letter-spacing:-0.196px;">DEPOSIT PAID</div>
<div class="t" style="left:948px;width:300px;text-align:center;top:387px;font-size:14.2px;font-weight:bold;color:#000;letter-spacing:-0.820px;">BALANCE</div>
<div class="t" style="left:948px;width:300px;text-align:center;top:409px;font-size:14.2px;font-weight:bold;color:#000;letter-spacing:-1.116px;">DUE</div>
<div class="a" style="left:552px;top:427px;width:599px;height:54px;background:#ccffcc"></div>
<div class="a" style="left:40px;top:427px;width:1112px;height:1px;background:#000080"></div>
<div class="a" style="left:40px;top:444px;width:1112px;height:2px;background:#000080"></div>
<div class="a" style="left:40px;top:462px;width:1112px;height:1px;background:#000080"></div>
<div class="a" style="left:40px;top:480px;width:1112px;height:2px;background:#000080"></div>
<div class="a" style="left:40px;top:427px;width:2px;height:55px;background:#000080"></div>
<div class="a" style="left:550px;top:427px;width:2px;height:55px;background:#000080"></div>
<div class="a" style="left:642px;top:427px;width:2px;height:55px;background:#000080"></div>
<div class="a" style="left:730px;top:427px;width:2px;height:55px;background:#000080"></div>
<div class="a" style="left:835px;top:427px;width:2px;height:55px;background:#000080"></div>
<div class="a" style="left:940px;top:427px;width:2px;height:55px;background:#000080"></div>
<div class="a" style="left:1045px;top:427px;width:2px;height:55px;background:#000080"></div>
<div class="a" style="left:1150px;top:427px;width:2px;height:55px;background:#000080"></div>
<div class="t" style="left:44px;top:430px;font-size:13px;font-weight:normal;color:#000;transform:scaleY(1.1);transform-origin:0 80%;letter-spacing:-0.107px;">Engagement Ring</div>
<div class="t" style="left:44px;top:447px;font-size:13px;font-weight:normal;color:#000;transform:scaleY(1.1);transform-origin:0 80%;letter-spacing:-0.079px;">Bride's Wedding Ring</div>
<div class="t" style="left:44px;top:465px;font-size:13px;font-weight:normal;color:#000;transform:scaleY(1.1);transform-origin:0 80%;letter-spacing:-0.079px;">Groom's Wedding Ring</div>
<div class="t" style="left:45px;top:524px;font-size:14px;font-weight:bold;color:#333300;transform:scaleX(1.0272);transform-origin:0 0;">Wedding Parties</div>
<div class="t" style="left:447px;width:300px;text-align:center;top:501px;font-size:14.2px;font-weight:bold;color:#000;letter-spacing:-0.478px;">Bride's</div>
<div class="t" style="left:447px;width:300px;text-align:center;top:523px;font-size:14.2px;font-weight:bold;color:#000;letter-spacing:-0.057px;">Family</div>
<div class="t" style="left:537px;width:300px;text-align:center;top:501px;font-size:14.2px;font-weight:bold;color:#000;letter-spacing:-0.836px;">Groom's</div>
<div class="t" style="left:537px;width:300px;text-align:center;top:523px;font-size:14.2px;font-weight:bold;color:#000;letter-spacing:-0.057px;">Family</div>
<div class="t" style="left:633px;width:300px;text-align:center;top:523px;font-size:14.2px;font-weight:bold;color:#000;letter-spacing:-0.274px;">Bride</div>
<div class="t" style="left:738px;width:300px;text-align:center;top:523px;font-size:14.2px;font-weight:bold;color:#000;letter-spacing:-0.511px;">Groom</div>
<div class="t" style="left:843px;width:300px;text-align:center;top:523px;font-size:14.2px;font-weight:bold;color:#000;letter-spacing:-0.196px;">DEPOSIT PAID</div>
<div class="t" style="left:948px;width:300px;text-align:center;top:501px;font-size:14.2px;font-weight:bold;color:#000;letter-spacing:-0.820px;">BALANCE</div>
<div class="t" style="left:948px;width:300px;text-align:center;top:523px;font-size:14.2px;font-weight:bold;color:#000;letter-spacing:-1.116px;">DUE</div>
<div class="a" style="left:552px;top:541px;width:599px;height:71px;background:#ccffcc"></div>
<div class="a" style="left:40px;top:541px;width:1112px;height:2px;background:#000080"></div>
<div class="a" style="left:40px;top:559px;width:1112px;height:1px;background:#000080"></div>
<div class="a" style="left:40px;top:576px;width:1112px;height:1px;background:#000080"></div>
<div class="a" style="left:40px;top:593px;width:1112px;height:1px;background:#000080"></div>
<div class="a" style="left:40px;top:611px;width:1112px;height:2px;background:#000080"></div>
<div class="a" style="left:40px;top:541px;width:2px;height:72px;background:#000080"></div>
<div class="a" style="left:550px;top:541px;width:2px;height:72px;background:#000080"></div>
<div class="a" style="left:642px;top:541px;width:2px;height:72px;background:#000080"></div>
<div class="a" style="left:730px;top:541px;width:2px;height:72px;background:#000080"></div>
<div class="a" style="left:835px;top:541px;width:2px;height:72px;background:#000080"></div>
<div class="a" style="left:940px;top:541px;width:2px;height:72px;background:#000080"></div>
<div class="a" style="left:1045px;top:541px;width:2px;height:72px;background:#000080"></div>
<div class="a" style="left:1150px;top:541px;width:2px;height:72px;background:#000080"></div>
<div class="t" style="left:44px;top:545px;font-size:13px;font-weight:normal;color:#000;transform:scaleY(1.1);transform-origin:0 80%;letter-spacing:-0.100px;">Engagement Party</div>
<div class="t" style="left:44px;top:562px;font-size:13px;font-weight:normal;color:#000;transform:scaleY(1.1);transform-origin:0 80%;letter-spacing:-0.075px;">Bridesmaids' Luncheon</div>
<div class="t" style="left:44px;top:579px;font-size:13px;font-weight:normal;color:#000;transform:scaleY(1.1);transform-origin:0 80%;letter-spacing:-0.100px;">Rehearsal Dinner</div>
<div class="t" style="left:44px;top:596px;font-size:13px;font-weight:normal;color:#000;transform:scaleY(1.1);transform-origin:0 80%;letter-spacing:-0.060px;">Out-of-Town Guests' Brunch</div>
<div class="t" style="left:45px;top:658px;font-size:14px;font-weight:bold;color:#333300;transform:scaleX(1.0254);transform-origin:0 0;">Stationary</div>
<div class="t" style="left:447px;width:300px;text-align:center;top:635px;font-size:14.2px;font-weight:bold;color:#000;letter-spacing:-0.478px;">Bride's</div>
<div class="t" style="left:447px;width:300px;text-align:center;top:657px;font-size:14.2px;font-weight:bold;color:#000;letter-spacing:-0.057px;">Family</div>
<div class="t" style="left:537px;width:300px;text-align:center;top:635px;font-size:14.2px;font-weight:bold;color:#000;letter-spacing:-0.836px;">Groom's</div>
<div class="t" style="left:537px;width:300px;text-align:center;top:657px;font-size:14.2px;font-weight:bold;color:#000;letter-spacing:-0.057px;">Family</div>
<div class="t" style="left:633px;width:300px;text-align:center;top:657px;font-size:14.2px;font-weight:bold;color:#000;letter-spacing:-0.274px;">Bride</div>
<div class="t" style="left:738px;width:300px;text-align:center;top:657px;font-size:14.2px;font-weight:bold;color:#000;letter-spacing:-0.511px;">Groom</div>
<div class="t" style="left:843px;width:300px;text-align:center;top:657px;font-size:14.2px;font-weight:bold;color:#000;letter-spacing:-0.196px;">DEPOSIT PAID</div>
<div class="t" style="left:948px;width:300px;text-align:center;top:635px;font-size:14.2px;font-weight:bold;color:#000;letter-spacing:-0.820px;">BALANCE</div>
<div class="t" style="left:948px;width:300px;text-align:center;top:657px;font-size:14.2px;font-weight:bold;color:#000;letter-spacing:-1.116px;">DUE</div>
<div class="a" style="left:552px;top:675px;width:599px;height:85px;background:#ccffcc"></div>
<div class="a" style="left:40px;top:675px;width:1112px;height:2px;background:#000080"></div>
<div class="a" style="left:40px;top:693px;width:1112px;height:1px;background:#000080"></div>
<div class="a" style="left:40px;top:710px;width:1112px;height:1px;background:#000080"></div>
<div class="a" style="left:40px;top:727px;width:1112px;height:1px;background:#000080"></div>
<div class="a" style="left:40px;top:759px;width:1112px;height:2px;background:#000080"></div>
<div class="a" style="left:40px;top:675px;width:2px;height:86px;background:#000080"></div>
<div class="a" style="left:550px;top:675px;width:2px;height:86px;background:#000080"></div>
<div class="a" style="left:642px;top:675px;width:2px;height:86px;background:#000080"></div>
<div class="a" style="left:730px;top:675px;width:2px;height:86px;background:#000080"></div>
<div class="a" style="left:835px;top:675px;width:2px;height:86px;background:#000080"></div>
<div class="a" style="left:940px;top:675px;width:2px;height:86px;background:#000080"></div>
<div class="a" style="left:1045px;top:675px;width:2px;height:86px;background:#000080"></div>
<div class="a" style="left:1150px;top:675px;width:2px;height:86px;background:#000080"></div>
<div class="t" style="left:44px;top:679px;font-size:13px;font-weight:normal;color:#000;transform:scaleY(1.1);transform-origin:0 80%;letter-spacing:-0.058px;">Save the Date Announcements</div>
<div class="t" style="left:44px;top:696px;font-size:13px;font-weight:normal;color:#000;transform:scaleY(1.1);transform-origin:0 80%;letter-spacing:-0.031px;">Invitations including Reception and Response Cards</div>
<div class="t" style="left:44px;top:713px;font-size:13px;font-weight:normal;color:#000;transform:scaleY(1.1);transform-origin:0 80%;letter-spacing:-0.058px;">Thank you or Informal Cards</div>
<div class="t" style="left:44px;top:730px;font-size:13px;font-weight:normal;color:#000;transform:scaleY(1.1);transform-origin:0 80%;letter-spacing:-0.250px;">Postage</div>
<div class="a" style="left:1045px;top:382px;width:108px;height:47px;border:3px solid #000;border-bottom:none"></div>
<div class="a" style="left:1045px;top:426px;width:103px;height:1px;background:#000"></div>
<div class="a" style="left:1045px;top:427px;width:103px;height:1px;background:#f0e8a0"></div>
<div class="a" style="left:1045px;top:428px;width:103px;height:1px;background:#000"></div>
<div class="a" style="left:1150px;top:423px;width:3px;height:2px;background:#fff"></div>
<div class="a" style="left:1148px;top:425px;width:1px;height:5px;background:#fff"></div>
<div class="a" style="left:1149px;top:425px;width:5px;height:5px;background:#000"></div>
<div class="a" style="left:1150px;top:427px;width:2px;height:2px;background:#f0f0a0"></div>
<div class="a" style="left:1262px;top:121px;width:18px;height:615px;background:linear-gradient(90deg,#f3f1ec,#fefefb 40%,#fdfdfa 70%,#eeede5)"></div>
<div class="a" style="left:1263px;top:121px;width:15px;height:15px;border:1px solid #fff;border-radius:2px;background:linear-gradient(135deg,#dbe5fd,#c2d3fb 50%,#b1c6f7);box-shadow:0 0 0 1px #d9e0f0"></div>
<svg class="a" style="left:1266.0px;top:125.0px" width="9" height="7"><path d="M1 5L4.5 1.5L8 5" stroke="#4d6185" stroke-width="2" fill="none"/></svg>
<div class="a" style="left:1263px;top:721px;width:15px;height:15px;border:1px solid #fff;border-radius:2px;background:linear-gradient(135deg,#dbe5fd,#c2d3fb 50%,#b1c6f7);box-shadow:0 0 0 1px #d9e0f0"></div>
<svg class="a" style="left:1266.0px;top:725.0px" width="9" height="7"><path d="M1 1.5L4.5 5L8 1.5" stroke="#4d6185" stroke-width="2" fill="none"/></svg>
<div class="a" style="left:1263px;top:137px;width:16px;height:110px;border:1px solid #fff;border-radius:2px;background:linear-gradient(90deg,#c9d8fc,#c4d4fc 50%,#b8cbf8);box-shadow:0 0 0 1px #d3ddf4"></div>
<svg class="a" style="left:1267px;top:188px" width="8" height="8"><path d="M1 0.5h6M1 2.5h6M1 4.5h6M1 6.5h6" stroke="#8ba2d8"/></svg>
<div class="a" style="left:0;top:736px;width:1280px;height:16px;background:#ece9d8"></div>
<div class="a" style="left:0;top:736px;width:2px;height:16px;background:#a8a69c"></div>
<svg class="a" style="left:0px;top:736px" width="66" height="16"><path d="M5.5 5v7" stroke="#000" stroke-width="1.2"/><path d="M11 5L7 8.5L11 12z" fill="#000"/><path d="M27 5L23 8.5L27 12z" fill="#000"/><path d="M39 5L43 8.5L39 12z" fill="#000"/><path d="M55 5L59 8.5L55 12z" fill="#000"/><path d="M60.5 5v7" stroke="#000" stroke-width="1.2"/><path d="M65.5 1v15" stroke="#c8c4b4"/></svg>
<svg class="a" style="left:65px;top:736px" width="180" height="16"><path d="M0.5 0.5L8 15.5H169L176.5 0.5" fill="#fff" stroke="#000"/></svg>
<div class="a" style="left:64px;top:736px;width:2px;height:1px;background:#fff"></div>
<div class="t" style="left:76px;top:738px;font-size:12.5px;font-weight:bold;color:#000;">Wedding Expense Record</div>
<div class="a" style="left:243px;top:736px;width:520px;height:1px;background:#a8a69c"></div>
<div class="a" style="left:763px;top:737px;width:1px;height:15px;background:#111"></div>
<div class="a" style="left:765px;top:736px;width:497px;height:16px;background:linear-gradient(#f3f1ec,#fefefb 40%,#fdfdfa 70%,#eeede5)"></div>
<div class="a" style="left:766px;top:738px;width:14px;height:14px;border:1px solid #fff;border-radius:2px;background:linear-gradient(135deg,#dbe5fd,#c2d3fb 50%,#b1c6f7);box-shadow:0 0 0 1px #d9e0f0"></div>
<svg class="a" style="left:769.5px;top:740.5px" width="7" height="9"><path d="M5 1L1.5 4.5L5 8" stroke="#4d6185" stroke-width="2" fill="none"/></svg>
<div class="a" style="left:1247px;top:738px;width:14px;height:14px;border:1px solid #fff;border-radius:2px;background:linear-gradient(135deg,#dbe5fd,#c2d3fb 50%,#b1c6f7);box-shadow:0 0 0 1px #d9e0f0"></div>
<svg class="a" style="left:1250.5px;top:740.5px" width="7" height="9"><path d="M1.5 1L5 4.5L1.5 8" stroke="#4d6185" stroke-width="2" fill="none"/></svg>
<div class="a" style="left:782px;top:738px;width:397px;height:14px;border:1px solid #fff;border-radius:2px;background:linear-gradient(#c9d8fc,#c4d4fc 50%,#b8cbf8);box-shadow:0 0 0 1px #d3ddf4"></div>
<svg class="a" style="left:976px;top:741px" width="8" height="8"><path d="M0.5 1v6M2.5 1v6M4.5 1v6M6.5 1v6" stroke="#8ba2d8"/></svg>
<div class="a" style="left:1262px;top:736px;width:18px;height:16px;background:#ece9d8"></div>
<div class="a dock" style="left:0;top:752px;width:1280px;height:30px"></div>
<div class="a" style="left:0;top:752px;width:1280px;height:2px;background:#fff"></div>
<div class="tb" style="left:2px;top:756px;width:594px;height:24px"></div>
<div class="gd" style="left:5px;top:761px"></div>
<div class="gd" style="left:5px;top:765px"></div>
<div class="gd" style="left:5px;top:769px"></div>
<div class="gd" style="left:5px;top:773px"></div>
<div class="chev" style="left:585px;top:756px;width:11px;height:24px"></div>
<svg class="a" style="left:587px;top:769px" width="9" height="8"><path d="M2 2h6M2 4h6l-3 3z" stroke="#fff" fill="#fff" stroke-width="0.8"/><path d="M1 1.5h6" stroke="#000"/><path d="M1 3h6l-3 3z" fill="#000"/></svg>
<div class="t" style="left:12px;top:763px;font-size:11px">D<u style="text-decoration:none;border-bottom:1px solid #000">r</u>aw</div>
<svg class="a" style="left:35px;top:760px" width="16" height="16" viewBox="0 0 16 16"><path d="M5 7h6l-3 3z" fill="#000"/></svg>
<svg class="a" style="left:52px;top:760px" width="16" height="16" viewBox="0 0 16 16"><path d="M4 1v12l3-3 2.5 5 2-1-2.5-5h4z" fill="#fff" stroke="#555"/></svg>
<div class="sep" style="left:74px;top:760px"></div>
<div class="t" style="left:82px;top:763px;font-size:11px;letter-spacing:-0.3px">A<u style="text-decoration:none;border-bottom:1px solid #000">u</u>toShapes</div>
<svg class="a" style="left:137px;top:760px" width="16" height="16" viewBox="0 0 16 16"><path d="M5 7h6l-3 3z" fill="#000"/></svg>
<svg class="a" style="left:155px;top:760px" width="16" height="16" viewBox="0 0 16 16"><path d="M2 2l12 12" stroke="#000" stroke-width="1.2"/></svg>
<svg class="a" style="left:178px;top:760px" width="16" height="16" viewBox="0 0 16 16"><path d="M2 2l10 10" stroke="#000" stroke-width="1.4"/><path d="M14 14l-6-2 4-4z" fill="#000"/></svg>
<svg class="a" style="left:201px;top:760px" width="16" height="16" viewBox="0 0 16 16"><rect x="1.5" y="3.5" width="13" height="10" fill="none" stroke="#000"/></svg>
<svg class="a" style="left:225px;top:760px" width="16" height="16" viewBox="0 0 16 16"><ellipse cx="8" cy="8.5" rx="7" ry="5" fill="none" stroke="#000"/></svg>
<svg class="a" style="left:248px;top:760px" width="16" height="16" viewBox="0 0 16 16"><rect x="1.5" y="2.5" width="13" height="12" fill="#fff" stroke="#555"/><text x="4" y="8" font-family="Liberation Sans" font-size="6" fill="#000">A</text><path d="M8 6h5M3 9h10M3 11h10" stroke="#556"/></svg>
<svg class="a" style="left:270px;top:760px" width="16" height="16" viewBox="0 0 16 16"><path d="M1 15L9 1h3l1 14h-3l-0.5-4H6l-2 4z" fill="#3a78e8" stroke="#1a48b0" stroke-width="0.8"/><path d="M6.8 9h2.6l-0.4-5z" fill="#d8e4fa"/></svg>
<svg class="a" style="left:293px;top:760px" width="16" height="16" viewBox="0 0 16 16"><circle cx="8" cy="3" r="2" fill="#e0a030"/><circle cx="3" cy="11" r="2" fill="#4a8a3a"/><circle cx="13" cy="11" r="2" fill="#d83a2a"/><path d="M4 6a5 5 0 0 1 8 0M12 14a5 5 0 0 1-8 0" stroke="#555" fill="none"/></svg>
<svg class="a" style="left:317px;top:760px" width="16" height="16" viewBox="0 0 16 16"><rect x="1.5" y="1.5" width="13" height="13" fill="#fff" stroke="#555"/><circle cx="8" cy="6" r="3" fill="#c86a3a"/><path d="M3 14c0-4 10-4 10 0" fill="#c86a3a"/></svg>
<svg class="a" style="left:340px;top:760px" width="16" height="16" viewBox="0 0 16 16"><rect x="1.5" y="1.5" width="13" height="13" fill="#fff" stroke="#555"/><path d="M2 13l5-6 3 3 2-2 3 4z" fill="#8ab0d8" stroke="#4a6a98"/><circle cx="11" cy="5" r="1.5" fill="#e84a2a"/></svg>
<svg class="a" style="left:369px;top:760px" width="16" height="16" viewBox="0 0 16 16"><path d="M2.5 6.5l5-5 5 5-5 5z" fill="#fff" stroke="#333"/><path d="M4 6.5h7l-3.5 3.5z" fill="#c8d0e0"/><path d="M6 1V-1" stroke="#333"/><path d="M12.5 6.5c1.5 0.5 2 2 1.5 4" stroke="#3a6ad8" stroke-width="1.6" fill="none"/><rect x="1" y="12" width="15" height="4" fill="#f6f000"/></svg>
<svg class="a" style="left:403px;top:760px" width="16" height="16" viewBox="0 0 16 16"><path d="M2 11l8-8 2 2-8 8z" fill="#6a8ad8" stroke="#2a3a8a"/><path d="M10 3l3-3 2 2-3 3z" fill="#e8c040"/><rect x="1" y="12" width="14" height="4" fill="#1a1aff"/></svg>
<svg class="a" style="left:438px;top:760px" width="16" height="16" viewBox="0 0 16 16"><text x="1.5" y="11.5" font-family="Liberation Serif" font-weight="bold" font-size="14.5" fill="#2a3a8a">A</text><rect x="0.5" y="12" width="15" height="4" fill="#e8141a"/></svg>
<svg class="a" style="left:470px;top:760px" width="16" height="16" viewBox="0 0 16 16"><path d="M1 4h14" stroke="#000" stroke-width="1"/><path d="M1 7.5h14" stroke="#000" stroke-width="2"/><path d="M1 12h14" stroke="#000" stroke-width="3"/></svg>
<svg class="a" style="left:493px;top:760px" width="16" height="16" viewBox="0 0 16 16"><path d="M1 4.5h14M1 8.5h14M1 12.5h14" stroke="#000" stroke-dasharray="1 1"/></svg>
<svg class="a" style="left:516px;top:760px" width="16" height="16" viewBox="0 0 16 16"><path d="M2 4.5h12M2 11.5h12" stroke="#000" stroke-width="1.3"/><path d="M14 4.5l-3-3v6zM2 11.5l3-3v6z" fill="#000"/></svg>
<svg class="a" style="left:539px;top:760px" width="16" height="16" viewBox="0 0 16 16"><rect x="4" y="4" width="11" height="11" fill="#555"/><rect x="1" y="1" width="11" height="11" fill="#6aba5a" stroke="#3a7a2a"/></svg>
<svg class="a" style="left:563px;top:760px" width="16" height="16" viewBox="0 0 16 16"><path d="M1 5l4-4h10v10l-4 4H1z" fill="#8ad07a" stroke="#3a7a2a"/><path d="M1 5h10v10M11 5l4-4" fill="none" stroke="#3a7a2a"/></svg>
<svg class="a" style="left:385px;top:760px" width="16" height="16" viewBox="0 0 16 16"><path d="M5 7h6l-3 3z" fill="#000"/></svg>
<svg class="a" style="left:419px;top:760px" width="16" height="16" viewBox="0 0 16 16"><path d="M5 7h6l-3 3z" fill="#000"/></svg>
<svg class="a" style="left:453px;top:760px" width="16" height="16" viewBox="0 0 16 16"><path d="M5 7h6l-3 3z" fill="#000"/></svg>
<div class="sep" style="left:362px;top:760px"></div>
<div class="a" style="left:0;top:782px;width:1280px;height:16px;background:#ece9d8"></div>
<div class="t" style="left:5px;top:787px;font-size:11px">Ready</div>
<div class="a" style="left:970px;top:784px;width:33px;height:14px;border:1px solid #cdcabb;border-bottom:none"></div>
<div class="a" style="left:1004px;top:784px;width:112px;height:14px;border:1px solid #cdcabb;border-bottom:none"></div>
<div class="a" style="left:1117px;top:784px;width:25px;height:14px;border:1px solid #cdcabb;border-bottom:none"></div>
<div class="a" style="left:1143px;top:784px;width:30px;height:14px;border:1px solid #cdcabb;border-bottom:none"></div>
<div class="a" style="left:1174px;top:784px;width:26px;height:14px;border:1px solid #cdcabb;border-bottom:none"></div>
<div class="a" style="left:1201px;top:784px;width:29px;height:14px;border:1px solid #cdcabb;border-bottom:none"></div>
<div class="a" style="left:1231px;top:784px;width:25px;height:14px;border:1px solid #cdcabb;border-bottom:none"></div>
<div class="a" style="left:1257px;top:784px;width:20px;height:14px;border:1px solid #cdcabb;border-bottom:none"></div>
<div class="a" style="left:0;top:798px;width:1280px;height:2px;background:#3a78dc"></div>
</body></html>
